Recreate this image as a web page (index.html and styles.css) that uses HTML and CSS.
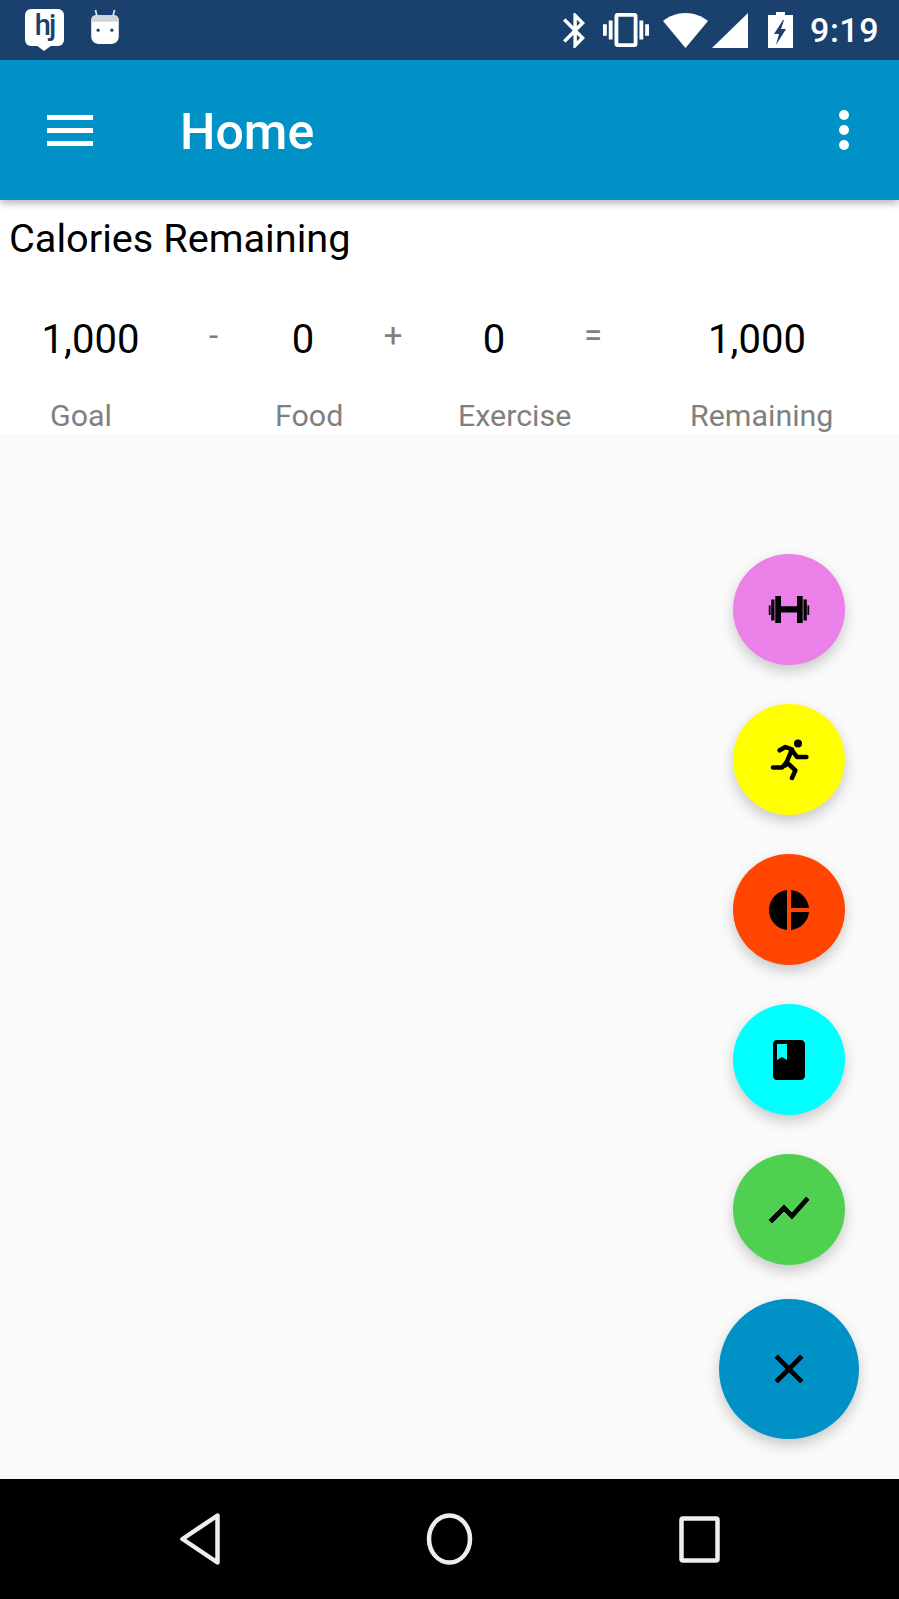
FILE: index.html
```html
<!DOCTYPE html>
<html lang="en">
<head>
  <meta charset="UTF-8" />
  <title>Home</title>
  <link rel="stylesheet" href="styles.css">
</head>
<body>

  <div class="status-bar">
    <div class="status-left">
      <div class="hi-icon">
        <span class="hi-text">hj</span>
        <svg class="hi-tail" viewBox="0 0 16 6"><path d="M0 0h16L8 6z" fill="#fff"/></svg>
      </div>
      <svg class="bot-icon" viewBox="0 0 28 34">
        <path d="M5 1l2 8M23 1l-2 8" stroke="#e3e6ea" stroke-width="1.6" fill="none"/>
        <path d="M5 6h18c2.500 0 4 2 4 5v15c0 4-3 7-7 7H8c-4 0-7-3-7-7V11c0-3 1.500-5 4-5z" fill="#fff"/>
        <path d="M5 6h18c2.500 0 4 2 4 5v1H1v-1c0-3 1.500-5 4-5z" fill="#cfd5dc"/>
        <circle cx="7.500" cy="20" r="1.500" fill="#1a416d"/>
        <circle cx="20.500" cy="20" r="1.500" fill="#1a416d"/>
      </svg>
    </div>
    <div class="status-right">
      <svg class="ic-bluetooth" viewBox="5 2 12.710 20" preserveAspectRatio="none"><path fill="#fff" d="M17.710 7.710L12 2h-1v7.590L6.410 5 5 6.410 10.590 12 5 17.590 6.410 19 11 14.410V22h1l5.710-5.710-4.300-4.290 4.300-4.290zM13 5.830l1.880 1.880L13 9.590V5.830zm1.880 10.460L13 18.170v-3.760l1.880 1.880z"/></svg>
      <svg class="ic-vibrate" viewBox="0 3 24 18" preserveAspectRatio="none"><path fill="#fff" d="M0 15h2V9H0v6zm3 2h2V7H3v10zm19-8v6h2V9h-2zm-3 8h2V7h-2v10zM16.500 3h-9C6.670 3 6 3.670 6 4.500v15c0 .83.67 1.500 1.500 1.500h9c.83 0 1.500-.67 1.500-1.500v-15c0-.83-.67-1.500-1.500-1.500zM16 19H8V5h8v14z"/></svg>
      <svg class="ic-wifi" viewBox="0 0 45 35"><path fill="#fff" d="M0 8C6 3 14 0 22.500 0S39 3 45 8L22.500 35z"/></svg>
      <svg class="ic-cell" viewBox="0 0 36 35"><path fill="#fff" d="M36 0v35H0z"/></svg>
      <svg class="ic-battery" viewBox="0 0 25 36">
        <path fill="#fff" d="M8 0h9v3h8v33H0V3h8z"/>
        <path fill="#1a416d" d="M15 8L6 22h5l-3 11 10-16h-5l3-9z"/>
      </svg>
      <span class="clock">9:19</span>
    </div>
  </div>

  <header class="toolbar">
    <div class="menu-btn">
      <span></span>
      <span></span>
      <span></span>
    </div>
    <h1>Home</h1>
    <div class="more-btn">
      <span></span>
      <span></span>
      <span></span>
    </div>
  </header>

  <section class="summary">
    <h2>Calories Remaining</h2>
    <div class="values">
      <span class="num">1,000</span>
      <span class="op">-</span>
      <span class="num">0</span>
      <span class="op">+</span>
      <span class="num">0</span>
      <span class="op">=</span>
      <span class="num">1,000</span>
    </div>
    <div class="labels">
      <span>Goal</span>
      <span>Food</span>
      <span>Exercise</span>
      <span>Remaining</span>
    </div>
  </section>

  <main class="content">
    <div class="fab-list">
      <button class="fab fab-pink">
        <svg viewBox="0 0 48 48">
          <path d="M3.800 19.500h1.800v9.500H3.800zM6.200 13.500h3.300v21H6.200zM10.300 10h5.700v27h-5.700zM16 20.200h16v6.300H16zM32 10h5.700v27H32zM38.500 13.500h3.300v21h-3.300zM42.400 19.500h1.800v9.500h-1.800z"/>
        </svg>
      </button>
      <button class="fab fab-yellow">
        <svg viewBox="0 0 48 48">
          <circle cx="33" cy="7.600" r="4"/>
          <path class="run" d="M14.700 14.300L20.400 11l6.600 2.300-6.600 16M27 14.300l5 6.700h9.400M20.400 27.600l-3.400 4H8M21.400 26l9 8.300-3.400 7.700"/>
        </svg>
      </button>
      <button class="fab fab-orange">
        <svg viewBox="0 0 24 24"><path d="M11 2v20c-5.070-.5-9-4.790-9-10s3.930-9.500 9-10zm2.030 0v8.990H22c-.47-4.740-4.240-8.520-8.970-8.990zm0 11.010V22c4.740-.47 8.500-4.250 8.970-8.990h-8.970z"/></svg>
      </button>
      <button class="fab fab-cyan">
        <svg viewBox="0 0 24 24"><path d="M18 2H6c-1.100 0-2 .9-2 2v16c0 1.100.9 2 2 2h12c1.100 0 2-.9 2-2V4c0-1.100-.9-2-2-2zM6 4h5v8l-2.500-1.500L6 12V4z"/></svg>
      </button>
      <button class="fab fab-green">
        <svg class="bold" viewBox="0 0 24 24"><path d="M3.500 18.490l6-6.010 4 4L22 6.920l-1.410-1.410-7.090 7.970-4-4L2 16.990z"/></svg>
      </button>
    </div>
    <button class="fab fab-main">
      <svg class="bold" viewBox="0 0 24 24"><path d="M19 6.410L17.590 5 12 10.590 6.410 5 5 6.410 10.590 12 5 17.590 6.410 19 12 13.410 17.590 19 19 17.590 13.410 12z"/></svg>
    </button>
  </main>

  <nav class="nav-bar">
    <svg class="nav-back" viewBox="0 0 40 52"><path d="M37.500 2.500v47L2.500 26z"/></svg>
    <svg class="nav-home" viewBox="0 0 47 53"><ellipse cx="23.500" cy="26" rx="20.500" ry="23.500"/></svg>
    <svg class="nav-recent" viewBox="0 0 41 47"><rect x="2.500" y="2.500" width="36" height="42" rx="1.500"/></svg>
  </nav>

</body>
</html>
```

FILE: styles.css
```css
* {
  box-sizing: border-box;
}

body {
  margin: 0;
  height: 1599px;
  display: flex;
  flex-direction: column;
  background-color: #fafafa;
  font-family: 'Roboto', sans-serif;
  overflow: hidden;
}

/* status bar */
.status-bar {
  height: 60px;
  flex: none;
  background-color: #1a416d;
  display: flex;
  justify-content: space-between;
  align-items: center;
}

.status-left {
  align-self: flex-start;
  display: flex;
  align-items: flex-start;
  padding: 9px 0 0 25px;
  gap: 26px;
}

.hi-icon {
  position: relative;
  width: 39px;
  height: 37px;
  background-color: #fff;
  border-radius: 6px;
  text-align: center;
}

.hi-text {
  color: #1a416d;
  font-size: 29px;
  font-weight: 500;
  line-height: 33px;
  letter-spacing: -2px;
}

.hi-tail {
  position: absolute;
  left: 11px;
  bottom: -5px;
  width: 16px;
  height: 6px;
}

.bot-icon {
  width: 30px;
  height: 36px;
}

.status-right {
  display: flex;
  align-items: center;
  padding-right: 20px;
}

.ic-bluetooth {
  width: 22px;
  height: 35px;
  margin-right: 18px;
}

.ic-vibrate {
  width: 46px;
  height: 34px;
  margin-right: 14px;
}

.ic-wifi {
  width: 45px;
  height: 35px;
  margin-right: 4px;
}

.ic-cell {
  width: 36px;
  height: 35px;
  margin-right: 20px;
}

.ic-battery {
  width: 25px;
  height: 36px;
  margin-right: 17px;
}

.clock {
  color: #fff;
  font-size: 34px;
  font-weight: 500;
  letter-spacing: 0.5px;
}

/* toolbar */
.toolbar {
  height: 140px;
  flex: none;
  background-color: #0091c7;
  display: flex;
  align-items: center;
  padding: 0 50px 0 47px;
  box-shadow: 0 3px 8px rgba(0, 0, 0, 0.3);
  position: relative;
  z-index: 2;
}

.menu-btn {
  width: 46px;
  display: flex;
  flex-direction: column;
  gap: 8px;
  margin-right: 87px;
}

.menu-btn span {
  height: 5px;
  background-color: #fff;
}

.toolbar h1 {
  flex: 1;
  margin: 0;
  padding-top: 3px;
  color: #fff;
  font-size: 50px;
  font-weight: 500;
}

.more-btn {
  display: flex;
  flex-direction: column;
  gap: 5px;
}

.more-btn span {
  width: 10px;
  height: 10px;
  border-radius: 50%;
  background-color: #fff;
}

/* summary card */
.summary {
  height: 234px;
  flex: none;
  background-color: #fff;
  padding-top: 15px;
}

.summary h2 {
  margin: 0 0 53px 9px;
  color: #000;
  font-size: 39.700px;
  font-weight: 400;
  line-height: 48px;
}

.values {
  display: grid;
  grid-template-columns: 181px 65px 114px 66px 136px 62px 266px;
  align-items: center;
  text-align: center;
  height: 48px;
}

.num {
  color: #000;
  font-size: 40px;
  line-height: 48px;
}

.op {
  color: #808080;
  font-size: 33px;
  line-height: 40px;
  padding-bottom: 8px;
}

.labels {
  display: grid;
  grid-template-columns: 225px 183px 232px auto;
  padding-left: 50px;
  margin-top: 34px;
  color: #808080;
  font-size: 30.400px;
  line-height: 36px;
}

/* fabs */
.content {
  flex: 1;
  display: flex;
  flex-direction: column;
  align-items: center;
  justify-content: flex-end;
  align-self: flex-end;
  padding: 0 40px 40px 0;
  gap: 34px;
}

.fab-list {
  display: flex;
  flex-direction: column;
  gap: 39px;
}

.fab {
  width: 112px;
  height: 111px;
  border: none;
  border-radius: 50%;
  padding: 0;
  display: flex;
  align-items: center;
  justify-content: center;
  box-shadow: 0 6px 14px rgba(0, 0, 0, 0.2);
}

.fab svg {
  width: 48px;
  height: 48px;
  fill: #000;
}

.fab svg.bold {
  stroke: #000;
  stroke-width: 0.5;
  stroke-linejoin: round;
}

.fab-pink { background-color: #ea80e8; }
.fab-yellow { background-color: #ffff00; }
.fab-orange { background-color: #ff4500; }
.fab-cyan { background-color: #00ffff; }
.fab-green { background-color: #50d050; }

.fab-main {
  width: 140px;
  height: 140px;
  background-color: #0091c7;
}

.fab svg .run {
  fill: none;
  stroke: #000;
  stroke-width: 4.500;
  stroke-linejoin: round;
  stroke-linecap: round;
}

/* bottom nav */
.nav-bar {
  height: 120px;
  flex: none;
  background-color: #000;
  display: flex;
  align-items: center;
  padding-left: 180px;
}

.nav-bar svg {
  fill: none;
  stroke: #eee;
  stroke-width: 4.500;
  stroke-linejoin: round;
}

.nav-back {
  width: 40px;
  height: 52px;
  margin-right: 206px;
}

.nav-home {
  width: 47px;
  height: 53px;
  margin-right: 206px;
}

.nav-recent {
  width: 41px;
  height: 47px;
}
```
